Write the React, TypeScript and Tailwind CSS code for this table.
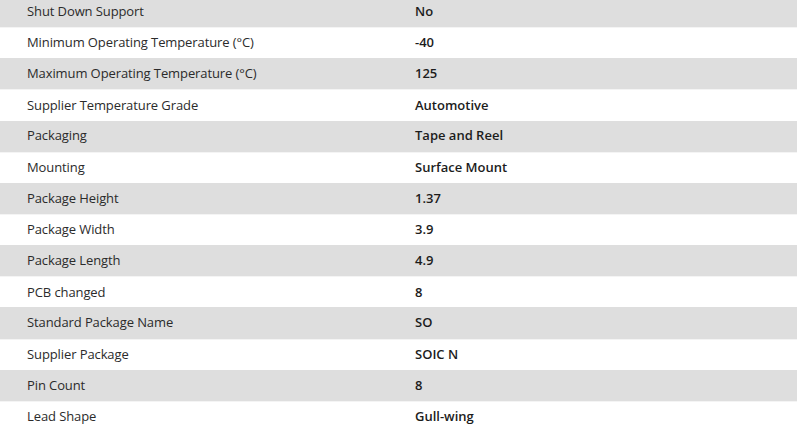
const rows: [string, string][] = [
  ["Shut Down Support", "No"],
  ["Minimum Operating Temperature (°C)", "-40"],
  ["Maximum Operating Temperature (°C)", "125"],
  ["Supplier Temperature Grade", "Automotive"],
  ["Packaging", "Tape and Reel"],
  ["Mounting", "Surface Mount"],
  ["Package Height", "1.37"],
  ["Package Width", "3.9"],
  ["Package Length", "4.9"],
  ["PCB changed", "8"],
  ["Standard Package Name", "SO"],
  ["Supplier Package", "SOIC N"],
  ["Pin Count", "8"],
  ["Lead Shape", "Gull-wing"],
];

const App = () => (
  <div className="h-[432px] w-[797px] overflow-hidden bg-white font-['Open_Sans',sans-serif] text-[13px]">
    <div className="-mt-[4px]">
      {rows.map(([label, value], i) => (
        <div
          key={label}
          className={`grid h-[31.15px] grid-cols-[415px_1fr] items-center ${
            i % 2 === 0 ? "bg-[#dedede]" : "bg-white border-t border-[#f4f4f4]"
          }`}
        >
          <span className="pl-[27px] tracking-[-0.1px] text-[#2b2b2b]">{label}</span>
          <span className="font-semibold text-[#1c1c1c]">{value}</span>
        </div>
      ))}
    </div>
  </div>
);

export default App;
